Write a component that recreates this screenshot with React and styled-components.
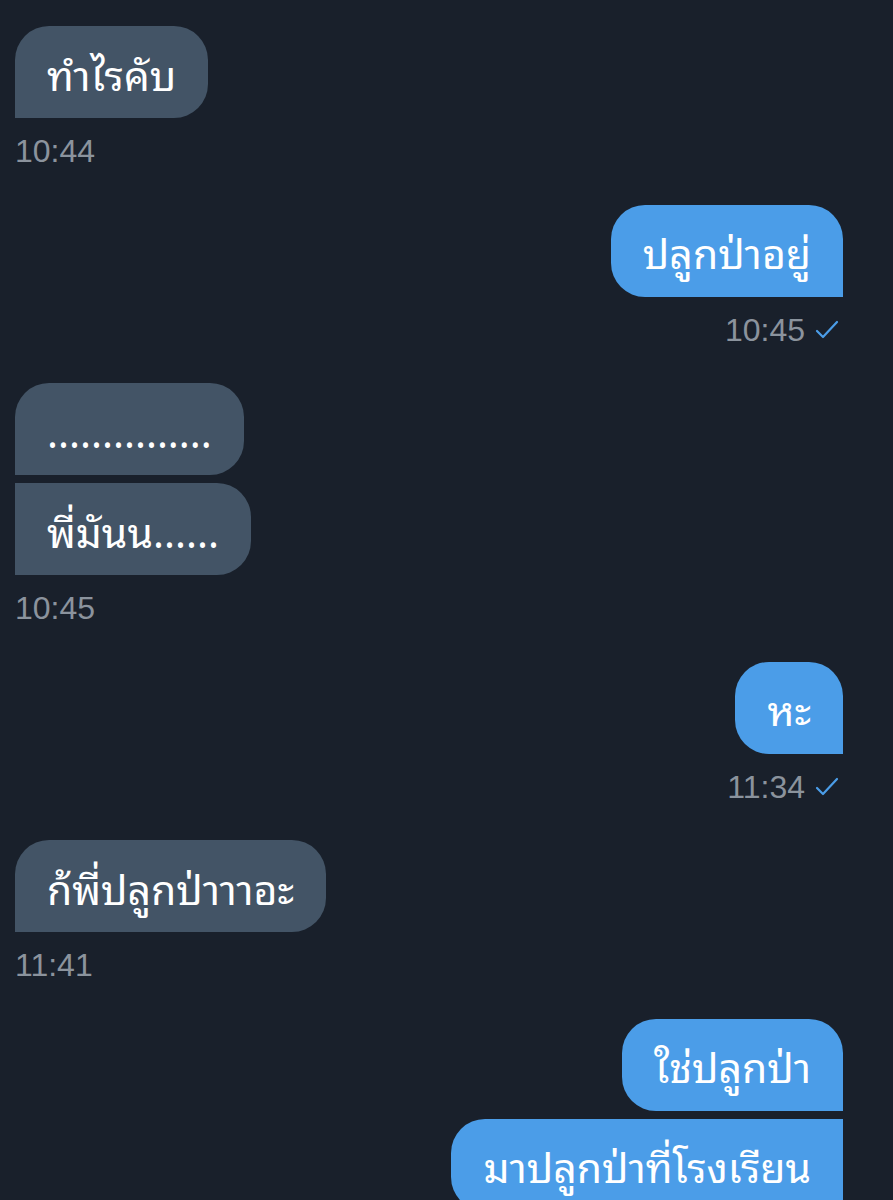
import React from 'react';
import styled, { createGlobalStyle } from 'styled-components';

const GlobalStyle = createGlobalStyle`
  html, body {
    margin: 0;
    padding: 0;
    background: #19202b;
  }
`;

const messages = [
  { out: false, time: '10:44', texts: ['ทำไรคับ'] },
  { out: true, time: '10:45', texts: ['ปลูกป่าอยู่'] },
  { out: false, time: '10:45', texts: ['...............', 'พี่มันน......'] },
  { out: true, time: '11:34', texts: ['หะ'] },
  { out: false, time: '11:41', texts: ['ก้พี่ปลูกป่าาาอะ'] },
  { out: true, time: null, texts: ['ใช่ปลูกป่า', 'มาปลูกป่าที่โรงเรียน'] },
];

function Check() {
  return (
    <svg width="24" height="20" viewBox="0 0 24 20">
      <polyline
        points="2,11 8,17 22,2"
        fill="none"
        stroke="#4b9de8"
        strokeWidth="2.2"
        strokeLinecap="round"
        strokeLinejoin="round"
      />
    </svg>
  );
}

function Group({ out, time, texts }) {
  return (
    <GroupWrap $out={out}>
      <Stack $out={out}>
        {texts.map((t, i) => (
          <Bubble key={i} $out={out} $first={i === 0}>
            {t}
          </Bubble>
        ))}
      </Stack>
      {time && (
        <Meta>
          <span>{time}</span>
          {out && <Check />}
        </Meta>
      )}
    </GroupWrap>
  );
}

export default function App() {
  return (
    <>
      <GlobalStyle />
      <Chat>
        {messages.map((m, i) => (
          <Group key={i} {...m} />
        ))}
      </Chat>
    </>
  );
}

const Chat = styled.div`
  height: 1200px;
  box-sizing: border-box;
  padding: 26px 50px 0 15px;
  display: flex;
  flex-direction: column;
  gap: 36.5px;
  overflow: hidden;
`;

const GroupWrap = styled.div`
  display: flex;
  flex-direction: column;
  align-items: ${(p) => (p.$out ? 'flex-end' : 'flex-start')};
`;

const Stack = styled.div`
  display: flex;
  flex-direction: column;
  align-items: ${(p) => (p.$out ? 'flex-end' : 'flex-start')};
  gap: 8px;
`;

const Bubble = styled.div`
  box-sizing: border-box;
  height: 92px;
  flex-shrink: 0;
  padding: 0 32px;
  display: flex;
  align-items: center;
  font-family: 'Noto Sans Thai Looped', 'Loma', 'Garuda', 'Norasi', 'Noto Sans',
    'Noto Sans Thai', 'DejaVu Sans', sans-serif;
  font-size: 41px;
  color: #ffffff;
  white-space: nowrap;
  background: ${(p) => (p.$out ? '#4b9de8' : '#435466')};
  border-radius: ${(p) =>
    p.$out
      ? `34px ${p.$first ? '34px' : '0'} 0 34px`
      : `${p.$first ? '34px' : '0'} 34px 34px 0`};
`;

const Meta = styled.div`
  margin-top: 16px;
  height: 34px;
  display: flex;
  align-items: center;
  gap: 10px;
  padding-right: 4px;
  font-family: 'Liberation Sans', Arial, sans-serif;
  font-size: 32px;
  line-height: 34px;
  color: #8b939d;
`;
